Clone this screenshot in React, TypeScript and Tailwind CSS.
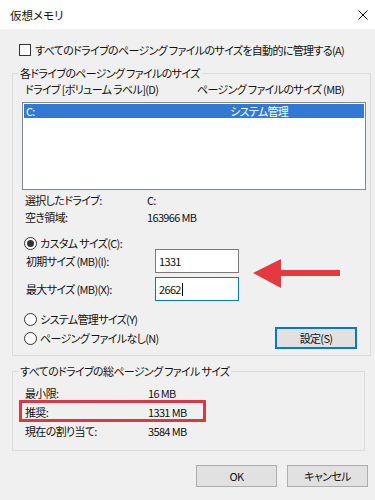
import React from "react";

const font = "font-['Noto_Sans_CJK_JP','Noto_Sans',sans-serif] [font-feature-settings:'palt']";

function Radio({ checked }: { checked?: boolean }) {
  return (
    <span className="flex h-[13px] w-[13px] shrink-0 items-center justify-center rounded-full border border-[#333] bg-white">
      {checked && <span className="h-[7px] w-[7px] rounded-full bg-[#333]" />}
    </span>
  );
}

function InfoRow({ label, value, h }: { label: string; value: string; h: string }) {
  return (
    <div className={`flex items-center pl-[12px] ${h}`}>
      <span className="w-[123px]">{label}</span>
      <span>{value}</span>
    </div>
  );
}

export default function App() {
  return (
    <div className={`h-[500px] w-[375px] overflow-hidden bg-[#f0f0f0] text-[11px] leading-[14px] tracking-[-0.65px] text-[#111] ${font}`}>
      {/* タイトルバー */}
      <div className="flex h-[29px] items-center justify-between bg-white pl-[10px] pr-[7px]">
        <span className="text-[11.5px] tracking-normal">仮想メモリ</span>
        <svg width="10" height="10" viewBox="0 0 10 10">
          <path d="M0.5 0.5 L9.5 9.5 M9.5 0.5 L0.5 9.5" stroke="#111" strokeWidth="1" />
        </svg>
      </div>

      <div className="pl-[12px]">
        <div className="mt-[15px] flex h-[12px] items-center">
          <span className="ml-[7px] h-[12px] w-[12px] border border-[#333] bg-white" />
          <span className="ml-[4px] whitespace-nowrap">すべてのドライブのページング ファイルのサイズを自動的に管理する(A)</span>
        </div>

        {/* 各ドライブ */}
        <fieldset className="mt-[10px] w-[359px] border border-[#dcdcdc] pb-[6px]">
          <legend className="ml-[5px] px-[2px] leading-[14px]">各ドライブのページング ファイルのサイズ</legend>
          <div className="mt-[2px] flex pl-[12px]">
            <span className="w-[172px]">ドライブ [ボリューム ラベル](D)</span>
            <span>ページング ファイルのサイズ (MB)</span>
          </div>
          <div className="ml-[9px] mt-[6px] h-[88px] w-[344px] border border-[#828790] bg-white p-[1px]">
            <div className="flex h-[14px] bg-[#3279d5] pl-[2px] text-white">
              <span className="w-[204px]">C:</span>
              <span>システム管理</span>
            </div>
          </div>
          <div className="mt-[2px] leading-[17px]">
            <div className="flex pl-[12px]">
              <span className="w-[122px]">選択したドライブ:</span>
              <span>C:</span>
            </div>
            <div className="flex pl-[12px]">
              <span className="w-[122px]">空き領域:</span>
              <span>163966 MB</span>
            </div>
          </div>

          <div className="mt-[11px] flex h-[12px] items-center pl-[11px]">
            <Radio checked />
            <span className="ml-[3px]">カスタム サイズ(C):</span>
          </div>
          <div className="relative">
            <div className="flex h-[24px] items-center pl-[13px]">
              <span className="w-[129px]">初期サイズ (MB)(I):</span>
              <div className="flex h-[24px] w-[84px] items-center border border-[#7a7a7a] bg-white pl-[3px]">1331</div>
            </div>
            <div className="mt-[4px] flex h-[24px] items-center pl-[13px]">
              <span className="w-[129px]">最大サイズ (MB)(X):</span>
              <div className="flex h-[24px] w-[84px] items-center border border-[#0078d7] bg-white pl-[3px]">
                2662<span className="ml-[1px] h-[13px] w-[1px] bg-black" />
              </div>
            </div>
            <svg width="88" height="30" viewBox="0 0 88 30" className="absolute left-[240px] top-[10px]">
              <path d="M0 14 L28 0 L28 11 L87 11 L87 17 L28 17 L28 29 Z" fill="#e3393f" />
            </svg>
          </div>
          <div className="mt-[11px] flex h-[14px] items-center pl-[11px]">
            <Radio />
            <span className="ml-[3px]">システム管理サイズ(Y)</span>
          </div>
          <div className="mt-[1px] flex h-[22px] items-center justify-between pl-[11px] pr-[13px]">
            <div className="flex items-center">
              <Radio />
              <span className="ml-[3px]">ページング ファイルなし(N)</span>
            </div>
            <button className="flex h-[22px] w-[82px] items-center justify-center border-2 border-[#0078d7] bg-[#e1e1e1]">
              設定(S)
            </button>
          </div>
        </fieldset>

        {/* 総ページング ファイル サイズ */}
        <fieldset className="mt-[8px] w-[353px] border border-[#dcdcdc] pb-[9px]">
          <legend className="ml-[5px] px-[2px] leading-[14px]">すべてのドライブの総ページング ファイル サイズ</legend>
          <div className="relative mt-[5px]">
            <InfoRow label="最小限:" value="16 MB" h="h-[19px]" />
            <InfoRow label="推奨:" value="1331 MB" h="h-[19px]" />
            <InfoRow label="現在の割り当て:" value="3584 MB" h="h-[20px]" />
            <div className="absolute left-[6px] top-[17px] h-[22px] w-[187px] border-[3px] border-[#e0363f]" />
          </div>
        </fieldset>

        <div className="mt-[14px] flex justify-end gap-[10px] pr-[7px]">
          <button className="flex h-[22px] w-[81px] items-center justify-center border border-[#adadad] bg-[#e1e1e1]">OK</button>
          <button className="flex h-[22px] w-[81px] items-center justify-center border border-[#adadad] bg-[#e1e1e1]">キャンセル</button>
        </div>
      </div>
    </div>
  );
}
